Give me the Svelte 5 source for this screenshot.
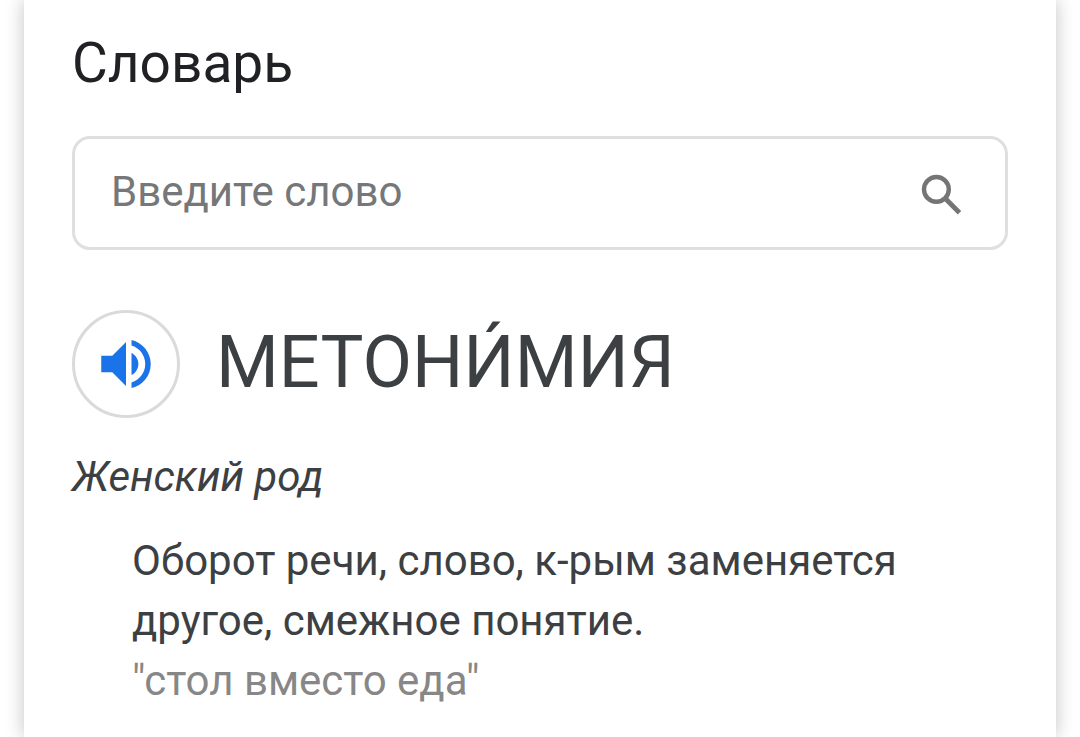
<script>
  let query = $state('');
</script>

<main class="card">
  <h1>Словарь</h1>
  <form class="search" role="search" onsubmit={(e) => e.preventDefault()}>
    <input type="text" aria-label="Введите слово" placeholder="Введите слово" bind:value={query} />
    <button class="find" type="submit" aria-label="Найти">
      <svg viewBox="0 0 54 54" width="54" height="54" fill="none" stroke="#757575"><circle cx="21.4" cy="23.4" r="12.4" stroke-width="4.4"/><path d="M30.8 33 L44.5 46.7" stroke-width="4.8"/></svg>
    </button>
  </form>
  <div class="word">
    <button class="speak" type="button" aria-label="Прослушать">
      <svg viewBox="0 0 24 24" width="66" height="66" fill="#1a73e8"><path d="M3 9v6h4l5 5V4L7 9H3zm13.5 3c0-1.77-1.02-3.29-2.5-4.03v8.05c1.48-.73 2.5-2.25 2.5-4.02zM14 3.23v2.06c2.89.86 5 3.54 5 6.71s-2.11 5.85-5 6.71v2.06c4.01-.91 7-4.49 7-8.77s-2.99-7.86-7-8.77z"/></svg>
    </button>
    <h2>МЕТОНИ́МИЯ</h2>
  </div>
  <p class="gender">Женский род</p>
  <div class="meaning">
    <p>Оборот речи, слово, к-рым заменяется другое, смежное понятие.</p>
    <p class="example">"стол вместо еда"</p>
  </div>
</main>

<style>
  :global(body) { background: #fff; }
  .card {
    box-sizing: border-box;
    min-height: 100vh;
    margin: 0 24px;
    padding: 31px 48px 24px;
    background: #fff;
    box-shadow: 0 0 18px rgba(0, 0, 0, 0.24);
    font-family: Roboto, sans-serif;
    color: #3c4043;
  }
  h1, h2, p { margin: 0; font-weight: 400; }
  h1 { font-size: 55px; line-height: 64px; color: #202124; }
  .search {
    display: flex;
    align-items: center;
    box-sizing: border-box;
    height: 114px;
    margin-top: 41px;
    padding: 0 36px;
    border: 3px solid #dfdfdf;
    border-radius: 18px;
  }
  input {
    flex: 1;
    min-width: 0;
    padding: 0 0 2px;
    border: 0;
    outline: 0;
    background: none;
    font: 42px/60px Roboto, sans-serif;
    color: #3c4043;
  }
  input::placeholder { color: #757779; opacity: 1; }
  button { display: flex; align-items: center; justify-content: center; padding: 0; background: none; cursor: pointer; }
  .find { border: 0; }
  .word { display: flex; align-items: center; gap: 36px; margin-top: 60px; }
  .speak { flex: none; box-sizing: border-box; width: 108px; height: 108px; border: 3px solid #dadada; border-radius: 50%; }
  h2 { padding-bottom: 2px; font-size: 72px; line-height: 84px; }
  .gender { margin-top: 29px; font-size: 42px; line-height: 60px; font-style: italic; }
  .meaning { margin: 24px 0 0 60px; font-size: 42px; line-height: 60px; }
  .example { color: #878787; }
</style>
